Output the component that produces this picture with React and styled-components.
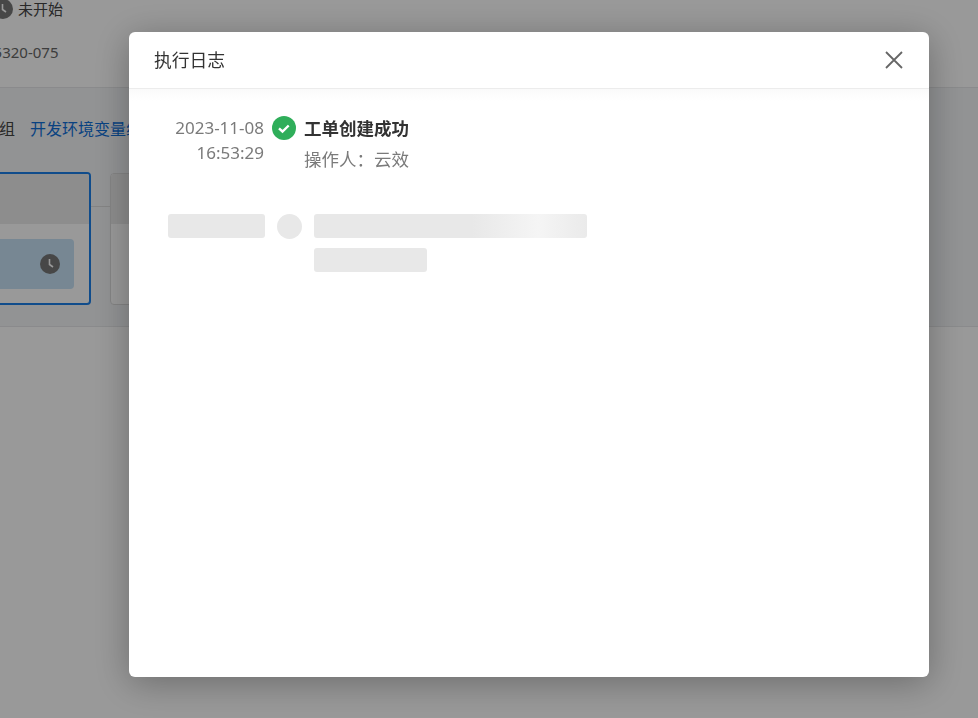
import React from 'react'
import styled, {createGlobalStyle} from 'styled-components'

const Global = createGlobalStyle`
  html, body { margin: 0; padding: 0; height: 100%; background: #fff; overflow: hidden; }
  body { font-family: "Noto Sans", "Noto Sans CJK SC", sans-serif; }
`

const Page = styled.div`
  width: 978px;
  height: 718px;
  overflow: hidden;
  color: #333;
`
const TopBar = styled.div`
  height: 87px;
  box-sizing: border-box;
  background: #fff;
`
const StatusRow = styled.div`
  display: flex;
  align-items: center;
  gap: 5px;
  height: 18px;
  margin-left: -7px;
  font-size: 15px;
  color: #444;
  span { margin-top: -2px; }
`
const OrderNo = styled.div`
  margin: 24px 0 0 -15px;
  font-size: 15px;
  line-height: 20px;
  color: #666;
`
const Stage = styled.div`
  height: 240px;
  box-sizing: border-box;
  border-top: 1px solid #e6e7e9;
  border-bottom: 1px solid #e6e7e9;
  background: #f3f5f7;
`
const Tabs = styled.div`
  display: flex;
  gap: 15px;
  margin-left: -17px;
  padding-top: 29px;
  height: 84px;
  box-sizing: border-box;
  font-size: 16px;
  line-height: 24px;
`
const Tab = styled.span`
  white-space: nowrap;
  color: ${p => (p.$active ? '#0f6fd8' : '#444')};
`
const Pipeline = styled.div`
  display: flex;
  align-items: flex-start;
`
const Job = styled.div`
  box-sizing: border-box;
  flex: none;
  width: ${p => p.$width}px;
  height: ${p => (p.$selected ? 133 : 132)}px;
  margin-left: ${p => p.$offset || 0}px;
  margin-top: ${p => (p.$selected ? 0 : 1)}px;
  border: ${p => (p.$selected ? '2px solid #1b7fe8' : '1px solid #dcdcdc')};
  border-radius: 4px;
  overflow: hidden;
  background: #fff;
`
const JobHead = styled.div`
  height: 50px;
  background: #ebebeb;
`
const JobTask = styled.div`
  display: flex;
  align-items: center;
  justify-content: flex-end;
  height: 50px;
  margin: 15px 15px 0 0;
  padding-right: 14px;
  border-radius: 4px;
  background: #c6e2f5;
`
const Connector = styled.div`
  flex: none;
  width: 19px;
  height: 1px;
  margin-top: 34px;
  background: #dcdcdc;
`

const Overlay = styled.div`
  position: fixed;
  inset: 0;
  padding: 32px 0 0 129px;
  background: rgba(0, 0, 0, 0.4);
`
const Modal = styled.div`
  width: 800px;
  height: 645px;
  border-radius: 6px;
  background: #fff;
  box-shadow: 0 6px 36px rgba(0, 0, 0, 0.3);
  overflow: hidden;
`
const ModalHead = styled.div`
  display: flex;
  align-items: center;
  justify-content: space-between;
  box-sizing: border-box;
  height: 57px;
  padding: 0 25px 2px;
  border-bottom: 1px solid #ececec;
  font-size: 17.8px;
  color: #333;
`
const Close = styled.svg`
  display: block;
  width: 20px;
  height: 20px;
  margin-top: 2px;
  color: #666;
`
const ModalBody = styled.div`
  padding: 26px 0 0 39px;
  background: linear-gradient(#fafafa, #fff 12px);
`
const LogRow = styled.div`
  display: flex;
  align-items: flex-start;
`
const LogTime = styled.div`
  width: 96px;
  font-size: 17px;
  line-height: 25px;
  text-align: right;
  color: #7a7a7a;
`
const LogIcon = styled.svg`
  flex: none;
  display: block;
  width: 24px;
  height: 24px;
  margin: 1px 8px 0;
`
const LogTitle = styled.div`
  margin-top: -1px;
  font-size: 17.5px;
  font-weight: 700;
  line-height: 28px;
  color: #333;
`
const LogOperator = styled.div`
  margin-top: 3px;
  font-size: 17.5px;
  line-height: 28px;
  color: #7a7a7a;
`
const SkeletonRow = styled.div`
  display: flex;
  align-items: flex-start;
  gap: 12px;
  margin-top: 41px;
`
const SkeletonCol = styled.div`
  display: flex;
  flex-direction: column;
  gap: 10px;
`
const Bone = styled.div`
  flex: none;
  width: ${p => p.$width}px;
  height: ${p => p.$height || 24}px;
  border-radius: ${p => (p.$round ? '50%' : '3px')};
  background: ${p => p.$shimmer
    ? 'linear-gradient(90deg, #e8e8e8 58%, #f5f5f5 82%, #eaeaea 100%)'
    : '#e8e8e8'};
`

function Clock({size}) {
  return (
    <svg width={size} height={size} viewBox="0 0 20 20" style={{flex: 'none', display: 'block'}}>
      <circle cx="10" cy="10" r="10" fill="#777" />
      <path d="M9.5 5v5.5l3.5 2.5" fill="none" stroke="#fff" strokeWidth="1.6" />
    </svg>
  )
}

export default function App() {
  return (
    <>
      <Global />
      <Page>
        <TopBar>
          <StatusRow>
            <Clock size={20} />
            <span>未开始</span>
          </StatusRow>
          <OrderNo>65320-075</OrderNo>
        </TopBar>
        <Stage>
          <Tabs>
            <Tab>分组</Tab>
            <Tab $active>开发环境变量组</Tab>
          </Tabs>
          <Pipeline>
            <Job $selected $width={180} $offset={-89}>
              <JobHead />
              <JobTask>
                <Clock size={20} />
              </JobTask>
            </Job>
            <Connector />
            <Job $width={180}>
              <JobHead />
            </Job>
          </Pipeline>
        </Stage>
      </Page>
      <Overlay>
        <Modal>
          <ModalHead>
            <span>执行日志</span>
            <Close viewBox="0 0 20 20">
              <path d="M2 2l16 16M18 2L2 18" fill="none" stroke="currentColor" strokeWidth="1.8" />
            </Close>
          </ModalHead>
          <ModalBody>
            <LogRow>
              <LogTime>2023-11-08<br />16:53:29</LogTime>
              <LogIcon viewBox="0 0 24 24">
                <circle cx="12" cy="12" r="12" fill="#2fae5a" />
                <path d="M7 12.3l3.5 3.2 6.2-6" fill="none" stroke="#fff" strokeWidth="2.4" />
              </LogIcon>
              <div>
                <LogTitle>工单创建成功</LogTitle>
                <LogOperator>操作人：云效</LogOperator>
              </div>
            </LogRow>
            <SkeletonRow>
              <Bone $width={97} />
              <Bone $width={25} $height={25} $round />
              <SkeletonCol>
                <Bone $width={273} $shimmer />
                <Bone $width={113} />
              </SkeletonCol>
            </SkeletonRow>
          </ModalBody>
        </Modal>
      </Overlay>
    </>
  )
}
